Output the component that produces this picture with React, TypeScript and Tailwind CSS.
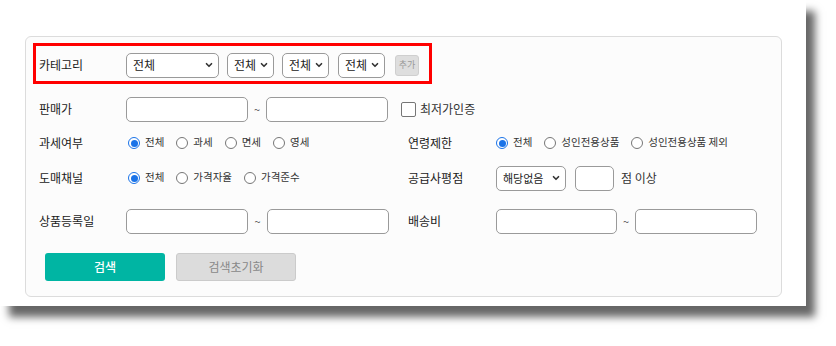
import { ChevronDown } from 'lucide-react';

const font = { fontFamily: '"Noto Sans CJK KR", "Noto Sans", sans-serif' };

function Select({ label, width, small }: { label: string; width: string; small?: boolean }) {
  return (
    <div
      className={`${width} shrink-0 h-[25px] flex items-center justify-between pl-[6px] pr-[4px] border border-[#9a9a9a] rounded-[5px] bg-white whitespace-nowrap ${
        small ? 'text-[11px]' : 'text-[12px]'
      } text-[#222]`}
    >
      <span>{label}</span>
      <ChevronDown className="w-[10px] h-[10px] shrink-0 text-[#333]" strokeWidth={4} />
    </div>
  );
}

function Box({ width }: { width: string }) {
  return <div className={`${width} shrink-0 h-[25px] border border-[#9a9a9a] rounded-[5px] bg-white`} />;
}

function Radio({ label, checked }: { label: string; checked?: boolean }) {
  return (
    <label className="flex items-center whitespace-nowrap">
      {checked ? (
        <span className="w-[12px] h-[12px] shrink-0 rounded-full border border-[#1a73e8] bg-white flex items-center justify-center">
          <span className="w-[7px] h-[7px] rounded-full bg-[#1a73e8]" />
        </span>
      ) : (
        <span className="w-[12px] h-[12px] shrink-0 rounded-full border border-[#767676] bg-white" />
      )}
      <span className="ml-[5px] -mt-[2px] text-[10.5px] text-[#333]">{label}</span>
    </label>
  );
}

function Label({ children }: { children: string }) {
  return <div className="w-[87px] shrink-0 text-[12px] text-[#1a1a1a]">{children}</div>;
}

function RightLabel({ children }: { children: string }) {
  return <div className="w-[88px] shrink-0 text-[12px] text-[#1a1a1a]">{children}</div>;
}

export default function App() {
  return (
    <div className="w-[836px] h-[346px] bg-white overflow-hidden" style={font}>
      <div className="w-[806px] h-[306px] bg-white shadow-[9px_11px_8px_rgba(0,0,0,0.6)] pt-[36px] pl-[25px]">
        <div className="relative w-[757px] h-[261px] bg-[#fcfcfc] border border-[#dcdcdc] rounded-[6px] pl-[13px] pt-[15px]">
          {/* annotation box */}
          <div className="absolute left-[7px] top-[6px] w-[399px] h-[41px] border-[3px] border-[#ff0000]" />

          <div className="flex items-center h-[26px]">
            <Label>카테고리</Label>
            <Select label="전체" width="w-[93px]" />
            <div className="ml-[8px]"><Select label="전체" width="w-[47px]" /></div>
            <div className="ml-[8px]"><Select label="전체" width="w-[47px]" /></div>
            <div className="ml-[9px]"><Select label="전체" width="w-[47px]" /></div>
            <div className="ml-[10px] w-[24px] h-[21px] rounded-[3px] bg-[#dedede] border border-[#cfcfcf] flex items-center justify-center text-[9px] text-[#999]">
              추가
            </div>
          </div>

          <div className="flex items-center h-[26px] mt-[18px]">
            <Label>판매가</Label>
            <Box width="w-[122px]" />
            <span className="w-[18px] text-center text-[11px] text-[#555]">~</span>
            <Box width="w-[122px]" />
            <div className="ml-[13px] w-[15px] h-[15px] border border-[#767676] rounded-[2px] bg-white" />
            <span className="ml-[4px] text-[12px] text-[#333]">최저가인증</span>
          </div>

          <div className="flex items-center h-[26px] mt-[8px]">
            <Label>과세여부</Label>
            <div className="w-[282px] flex items-center gap-[12px] pl-[2px]">
              <Radio label="전체" checked />
              <Radio label="과세" />
              <Radio label="면세" />
              <Radio label="영세" />
            </div>
            <RightLabel>연령제한</RightLabel>
            <div className="flex items-center gap-[12px]">
              <Radio label="전체" checked />
              <Radio label="성인전용상품" />
              <Radio label="성인전용상품 제외" />
            </div>
          </div>

          <div className="flex items-center h-[26px] mt-[9px]">
            <Label>도매채널</Label>
            <div className="w-[282px] flex items-center gap-[12px] pl-[2px]">
              <Radio label="전체" checked />
              <Radio label="가격자율" />
              <Radio label="가격준수" />
            </div>
            <RightLabel>공급사평점</RightLabel>
            <Select label="해당없음" width="w-[70px]" small />
            <div className="ml-[9px]"><Box width="w-[39px]" /></div>
            <span className="ml-[7px] text-[12px] text-[#333]">점 이상</span>
          </div>

          <div className="flex items-center h-[26px] mt-[17px]">
            <Label>상품등록일</Label>
            <div className="w-[282px] flex items-center">
              <Box width="w-[122px]" />
              <span className="w-[19px] text-center text-[11px] text-[#555]">~</span>
              <Box width="w-[122px]" />
            </div>
            <RightLabel>배송비</RightLabel>
            <Box width="w-[121px]" />
            <span className="w-[18px] text-center text-[11px] text-[#555]">~</span>
            <Box width="w-[122px]" />
          </div>

          <div className="flex items-center mt-[19px] pl-[6px] gap-[11px]">
            <button className="w-[120px] h-[28px] rounded-[3px] bg-[#00b5a3] text-white text-[12px] font-medium">
              검색
            </button>
            <button className="w-[120px] h-[28px] rounded-[3px] bg-[#dcdcdc] border border-[#cbcbcb] text-[#888] text-[12px]">
              검색초기화
            </button>
          </div>
        </div>
      </div>
    </div>
  );
}
